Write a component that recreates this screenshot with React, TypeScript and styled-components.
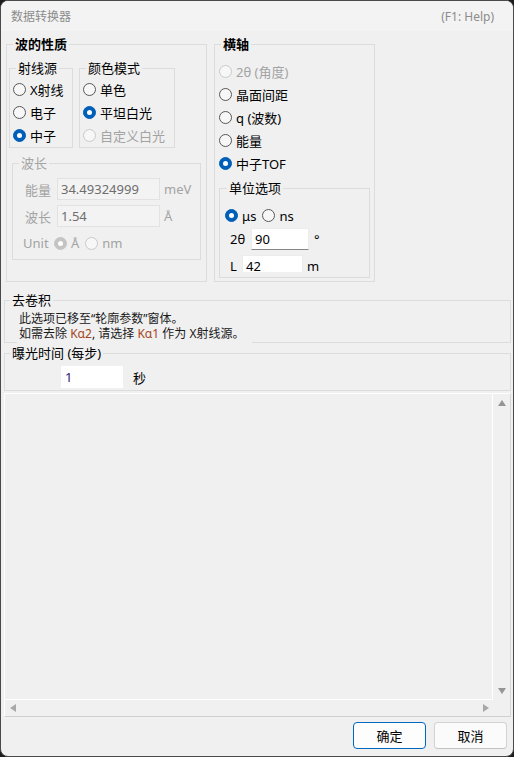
import React from 'react';
import styled, { createGlobalStyle } from 'styled-components';

const GlobalStyle = createGlobalStyle`
    html, body {
        margin: 0;
        padding: 0;
        background: #1c1c1c;
    }
    body {
        font-family: 'Noto Sans', 'Noto Sans CJK SC', sans-serif;
        font-size: 13px;
        color: #000;
    }
    #root {
        width: 514px;
        height: 757px;
    }
`;

const Window = styled.div`
    width: 514px;
    height: 757px;
    box-sizing: border-box;
    border: 1px solid #4a4a4a;
    border-radius: 8px;
    overflow: hidden;
    background: #f0f0f0;
    display: flex;
    flex-direction: column;
`;

const TitleBar = styled.div`
    flex: none;
    height: 30px;
    padding: 0 19px 0 10px;
    background: #f3f3f3;
    display: flex;
    align-items: center;
    justify-content: space-between;
    font-size: 12px;
    color: #8c8c8c;
`;

const Body = styled.div`
    flex: 1;
    display: flex;
    flex-direction: column;
    padding: 4px 2px 0 3px;
`;

const TopRow = styled.div`
    display: flex;
    gap: 7px;
    margin-left: 2px;
`;

const Group = styled.fieldset<{ $w: number; $h: number; $mt?: number; $ml?: number }>`
    margin: ${(p) => p.$mt ?? 0}px 0 0 ${(p) => p.$ml ?? 0}px;
    padding: 0;
    min-width: 0;
    box-sizing: border-box;
    width: ${(p) => p.$w}px;
    height: ${(p) => p.$h}px;
    border: 1px solid #dcdcdc;
    flex: none;
`;

const Legend = styled.legend<{ $bold?: boolean; $muted?: boolean; $ml?: number }>`
    margin-left: ${(p) => p.$ml ?? 6}px;
    padding: 0 2px;
    line-height: 18px;
    font-size: 13px;
    font-weight: ${(p) => (p.$bold ? 700 : 400)};
    color: ${(p) => (p.$muted ? '#a3a3a3' : '#000')};
`;

const Inner = styled.div<{ $pt: number; $pl: number }>`
    padding: ${(p) => p.$pt}px 0 0 ${(p) => p.$pl}px;
    display: flex;
    flex-direction: column;
`;

const Pair = styled.div`
    display: flex;
    gap: 6px;
`;

const RadioRow = styled.label<{ $muted?: boolean }>`
    display: flex;
    align-items: center;
    gap: 4px;
    height: 23px;
    white-space: nowrap;
    color: ${(p) => (p.$muted ? '#a3a3a3' : '#000')};
`;

const Circle = styled.span<{ $checked?: boolean; $muted?: boolean }>`
    flex: none;
    width: 13px;
    height: 13px;
    box-sizing: border-box;
    border-radius: 50%;
    display: flex;
    align-items: center;
    justify-content: center;
    border: 1px solid
        ${(p) => (p.$checked ? (p.$muted ? '#c4c4c4' : '#005fb8') : p.$muted ? '#c9c9c9' : '#575757')};
    background: ${(p) => (p.$checked ? (p.$muted ? '#c4c4c4' : '#005fb8') : '#f7f7f7')};

    &::after {
        content: '';
        display: ${(p) => (p.$checked ? 'block' : 'none')};
        width: 5px;
        height: 5px;
        border-radius: 50%;
        background: #fff;
    }
`;

const InlineRadios = styled.div`
    display: flex;
    align-items: center;
    gap: 6px;
    height: 23px;
`;

const FieldRow = styled.div<{ $mt?: number; $ml?: number }>`
    display: flex;
    align-items: center;
    height: 22px;
    margin-top: ${(p) => p.$mt ?? 0}px;
    margin-left: ${(p) => p.$ml ?? 0}px;
    white-space: nowrap;
`;

const FieldLabel = styled.span<{ $w: number; $muted?: boolean }>`
    flex: none;
    width: ${(p) => p.$w}px;
    color: ${(p) => (p.$muted ? '#a3a3a3' : '#000')};
`;

const Unit = styled.span<{ $ml: number; $muted?: boolean }>`
    margin-left: ${(p) => p.$ml}px;
    color: ${(p) => (p.$muted ? '#a3a3a3' : '#000')};
`;

const Input = styled.div<{ $w: number; $disabled?: boolean; $plain?: boolean; $color?: string }>`
    flex: none;
    width: ${(p) => p.$w}px;
    height: 22px;
    box-sizing: border-box;
    padding-left: 3px;
    display: flex;
    align-items: center;
    background: ${(p) => (p.$disabled ? '#f3f3f3' : '#fff')};
    border: 1px solid ${(p) => (p.$plain ? '#fff' : p.$disabled ? '#e2e2e2' : '#ececec')};
    border-bottom-color: ${(p) => (p.$plain ? '#fff' : p.$disabled ? '#e2e2e2' : '#868686')};
    color: ${(p) => p.$color ?? (p.$disabled ? '#6e6e6e' : '#000')};
`;

const Clip = styled.div`
    height: 75px;
    overflow: hidden;
`;

const Note = styled.div`
    display: inline-block;
    align-self: flex-start;
    margin-left: 12px;
    padding: 2px 8px 0 2px;
    height: 32px;
    background: #f0f0f0;
    font-size: 12px;
    line-height: 15px;
    color: #1a1a1a;
    white-space: nowrap;
`;

const Hl = styled.span`
    color: #a3461c;
`;

const ExposureRow = styled.div`
    display: flex;
    align-items: center;
    padding: 4px 0 0 56px;
`;

const LogArea = styled.div`
    margin-top: 2px;
    height: 324px;
    box-sizing: border-box;
    border: 1px solid;
    border-color: #fff #d6d6d6 #cfcfcf #fff;
    display: grid;
    grid-template-columns: 1fr 17px;
    grid-template-rows: 1fr 16px;
`;

const LogBody = styled.div`
    border-right: 1px solid #fff;
    border-bottom: 1px solid #fff;
`;

const VBar = styled.div`
    display: flex;
    flex-direction: column;
    align-items: center;
    justify-content: space-between;
    padding: 6px 0 6px;
`;

const HBar = styled.div`
    display: flex;
    align-items: center;
    justify-content: space-between;
    padding: 0 4px 0 5px;
`;

const Arrow = styled.span<{ $dir: 'up' | 'down' | 'left' | 'right' }>`
    width: 0;
    height: 0;
    border-style: solid;
    border-color: transparent;
    ${(p) =>
        p.$dir === 'up'
            ? 'border-width: 0 4px 6px 4px; border-bottom-color: #959595;'
            : p.$dir === 'down'
            ? 'border-width: 6px 4px 0 4px; border-top-color: #959595;'
            : p.$dir === 'left'
            ? 'border-width: 4px 6px 4px 0; border-right-color: #a8a8a8;'
            : 'border-width: 4px 0 4px 6px; border-left-color: #a8a8a8;'}
`;

const Buttons = styled.div`
    display: flex;
    justify-content: flex-end;
    gap: 8px;
    margin-top: 5px;
    padding-right: 4px;
`;

const Button = styled.button<{ $primary?: boolean }>`
    width: 73px;
    height: 27px;
    box-sizing: border-box;
    border-radius: 4px;
    font-family: inherit;
    font-size: 13px;
    color: #000;
    padding: 0;
    background: ${(p) => (p.$primary ? '#fdfdfd' : '#fbfbfb')};
    border: 1px solid ${(p) => (p.$primary ? '#0067c0' : '#d3d3d3')};
    border-bottom-color: ${(p) => (p.$primary ? '#0067c0' : '#c2c2c2')};
`;

type RadioProps = {
    label: React.ReactNode;
    checked?: boolean;
    muted?: boolean;
};

const Radio = ({ label, checked, muted }: RadioProps) => (
    <RadioRow $muted={muted}>
        <Circle $checked={checked} $muted={muted} />
        {label}
    </RadioRow>
);

const App = () => {
    return (
        <>
            <GlobalStyle />
            <Window>
                <TitleBar>
                    <span>数据转换器</span>
                    <span>(F1: Help)</span>
                </TitleBar>
                <Body>
                    <TopRow>
                        <Group $w={201} $h={247}>
                            <Legend $bold>波的性质</Legend>
                            <Inner $pt={6} $pl={2}>
                                <Pair>
                                    <Group $w={64} $h={89}>
                                        <Legend>射线源</Legend>
                                        <Inner $pt={1} $pl={3}>
                                            <Radio label="X射线" />
                                            <Radio label="电子" />
                                            <Radio label="中子" checked />
                                        </Inner>
                                    </Group>
                                    <Group $w={96} $h={89}>
                                        <Legend>颜色模式</Legend>
                                        <Inner $pt={1} $pl={3}>
                                            <Radio label="单色" />
                                            <Radio label="平坦白光" checked />
                                            <Radio label="自定义白光" muted />
                                        </Inner>
                                    </Group>
                                </Pair>
                                <Group $w={189} $h={106} $mt={6} $ml={3}>
                                    <Legend $muted>波长</Legend>
                                    <Inner $pt={6} $pl={12}>
                                        <FieldRow>
                                            <FieldLabel $w={32} $muted>
                                                能量
                                            </FieldLabel>
                                            <Input $w={103} $disabled>
                                                34.49324999
                                            </Input>
                                            <Unit $ml={4} $muted>
                                                meV
                                            </Unit>
                                        </FieldRow>
                                        <FieldRow $mt={5}>
                                            <FieldLabel $w={32} $muted>
                                                波长
                                            </FieldLabel>
                                            <Input $w={103} $disabled>
                                                1.54
                                            </Input>
                                            <Unit $ml={4} $muted>
                                                Å
                                            </Unit>
                                        </FieldRow>
                                        <FieldRow $mt={5} $ml={-2}>
                                            <FieldLabel $w={31} $muted>
                                                Unit
                                            </FieldLabel>
                                            <InlineRadios>
                                                <Radio label="Å" checked muted />
                                                <Radio label="nm" muted />
                                            </InlineRadios>
                                        </FieldRow>
                                    </Inner>
                                </Group>
                            </Inner>
                        </Group>
                        <Group $w={161} $h={247}>
                            <Legend $bold>横轴</Legend>
                            <Inner $pt={7} $pl={4}>
                                <Radio label="2θ (角度)" muted />
                                <Radio label="晶面间距" />
                                <Radio label="q (波数)" />
                                <Radio label="能量" />
                                <Radio label="中子TOF" checked />
                                <Group $w={151} $h={99} $mt={4}>
                                    <Legend $ml={7}>单位选项</Legend>
                                    <Clip>
                                        <Inner $pt={7} $pl={5}>
                                            <InlineRadios>
                                                <Radio label="μs" checked />
                                                <Radio label="ns" />
                                            </InlineRadios>
                                            <FieldRow $mt={1} $ml={5}>
                                                <FieldLabel $w={21}>2θ</FieldLabel>
                                                <Input $w={58}>90</Input>
                                                <Unit $ml={5}>°</Unit>
                                            </FieldRow>
                                            <FieldRow $mt={5} $ml={5}>
                                                <FieldLabel $w={12}>L</FieldLabel>
                                                <Input $w={61}>42</Input>
                                                <Unit $ml={4}>m</Unit>
                                            </FieldRow>
                                        </Inner>
                                    </Clip>
                                </Group>
                            </Inner>
                        </Group>
                    </TopRow>
                    <Group $w={507} $h={52} $mt={9}>
                        <Legend $ml={5}>去卷积</Legend>
                        <Inner $pt={0} $pl={0}>
                            <Note>
                                此选项已移至“轮廓参数”窗体。
                                <br />
                                如需去除 <Hl>Kα2</Hl>, 请选择 <Hl>Kα1</Hl> 作为 X射线源。
                            </Note>
                        </Inner>
                    </Group>
                    <Group $w={507} $h={47} $mt={1}>
                        <Legend $ml={5}>曝光时间 (每步)</Legend>
                        <ExposureRow>
                            <Input $w={62} $plain $color="#33166e">
                                1
                            </Input>
                            <Unit $ml={10}>秒</Unit>
                        </ExposureRow>
                    </Group>
                    <LogArea>
                        <LogBody />
                        <VBar>
                            <Arrow $dir="up" />
                            <Arrow $dir="down" />
                        </VBar>
                        <HBar>
                            <Arrow $dir="left" />
                            <Arrow $dir="right" />
                        </HBar>
                        <div />
                    </LogArea>
                    <Buttons>
                        <Button $primary>确定</Button>
                        <Button>取消</Button>
                    </Buttons>
                </Body>
            </Window>
        </>
    );
};

export default App;
